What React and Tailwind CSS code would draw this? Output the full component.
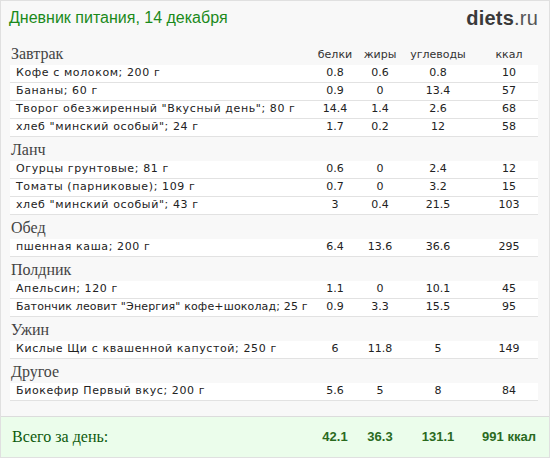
const meals = [
  {
    name: "Завтрак",
    items: [
      ["Кофе с молоком; 200 г", "0.8", "0.6", "0.8", "10"],
      ["Бананы; 60 г", "0.9", "0", "13.4", "57"],
      ["Творог обезжиренный \"Вкусный день\"; 80 г", "14.4", "1.4", "2.6", "68"],
      ["хлеб \"минский особый\"; 24 г", "1.7", "0.2", "12", "58"],
    ],
  },
  {
    name: "Ланч",
    items: [
      ["Огурцы грунтовые; 81 г", "0.6", "0", "2.4", "12"],
      ["Томаты (парниковые); 109 г", "0.7", "0", "3.2", "15"],
      ["хлеб \"минский особый\"; 43 г", "3", "0.4", "21.5", "103"],
    ],
  },
  {
    name: "Обед",
    items: [["пшенная каша; 200 г", "6.4", "13.6", "36.6", "295"]],
  },
  {
    name: "Полдник",
    items: [
      ["Апельсин; 120 г", "1.1", "0", "10.1", "45"],
      ["Батончик леовит \"Энергия\" кофе+шоколад; 25 г", "0.9", "3.3", "15.5", "95", true],
    ],
  },
  {
    name: "Ужин",
    items: [["Кислые Щи с квашенной капустой; 250 г", "6", "11.8", "5", "149"]],
  },
  {
    name: "Другое",
    items: [["Биокефир Первый вкус; 200 г", "5.6", "5", "8", "84"]],
  },
];

const cols = "grid grid-cols-[minmax(0,1fr)_44px_46px_70px_65px]";
const serif = "font-['Liberation_Serif',serif]";
const total = "text-center font-['Liberation_Sans',sans-serif] font-bold text-[13px] text-[#2a6a1e]";

function Row({ item }) {
  // длинное название поджато, чтобы не налезало на белки
  const tight = item[5] ? "tracking-[0.15px]" : "tracking-[0.6px]";
  return (
    <div className={`${cols} h-[18px] items-center bg-white border-b border-[#e2e2e2] text-[11px] text-[#222]`}>
      <div className={`pl-[6px] whitespace-nowrap ${tight}`}>{item[0]}</div>
      <div className="text-center">{item[1]}</div>
      <div className="text-center">{item[2]}</div>
      <div className="text-center">{item[3]}</div>
      <div className="text-center pl-[7px]">{item[4]}</div>
    </div>
  );
}

export default function App() {
  return (
    <div className="w-[550px] h-[458px] bg-[#f8f8f8] border border-[#e0e0e0] font-['DejaVu_Sans',Verdana,sans-serif] flex flex-col">
      <div className="h-[40px] flex justify-between items-start pt-[6px] pl-[8px] pr-[11px]">
        <div className="text-[16px] text-[#1b8a1b] leading-[22px] font-['Liberation_Sans',sans-serif]">Дневник питания, 14 декабря</div>
        <div className="text-[20px] leading-[22px] font-['Liberation_Sans',sans-serif] tracking-[0.2px]">
          <span className="font-bold text-[#3a3a3a]">diets</span>
          <span className="text-[#555]">.ru</span>
        </div>
      </div>
      <div className="px-[9px] pr-[11px]">
        {meals.map((m, i) => (
          <div key={m.name}>
            <div className={`${cols} h-[24px] items-end pb-[3px]`}>
              <div className={`${serif} text-[16px] leading-[16px] text-[#444] pl-[1px]`}>{m.name}</div>
              {i === 0 && (
                <>
                  <div className="text-center text-[11px] text-[#333] leading-[14px]">белки</div>
                  <div className="text-center text-[11px] text-[#333] leading-[14px]">жиры</div>
                  <div className="text-center text-[11px] text-[#333] leading-[14px]">углеводы</div>
                  <div className="text-center text-[11px] text-[#333] leading-[14px] pl-[7px]">ккал</div>
                </>
              )}
            </div>
            {m.items.map((it) => (
              <Row key={it[0]} item={it} />
            ))}
          </div>
        ))}
      </div>
      <div className="mt-auto h-[41px] border-t border-[#dcdcdc] bg-[#ebfdeb] px-[9px] pr-[11px]">
        <div className={`${cols} h-full items-center`}>
          <div className={`${serif} text-[16px] text-[#0d5a0d] pl-[2px]`}>Всего за день:</div>
          <div className={total}>42.1</div>
          <div className={total}>36.3</div>
          <div className={total}>131.1</div>
          <div className={`${total} pl-[7px] whitespace-nowrap`}>991 ккал</div>
        </div>
      </div>
    </div>
  );
}
